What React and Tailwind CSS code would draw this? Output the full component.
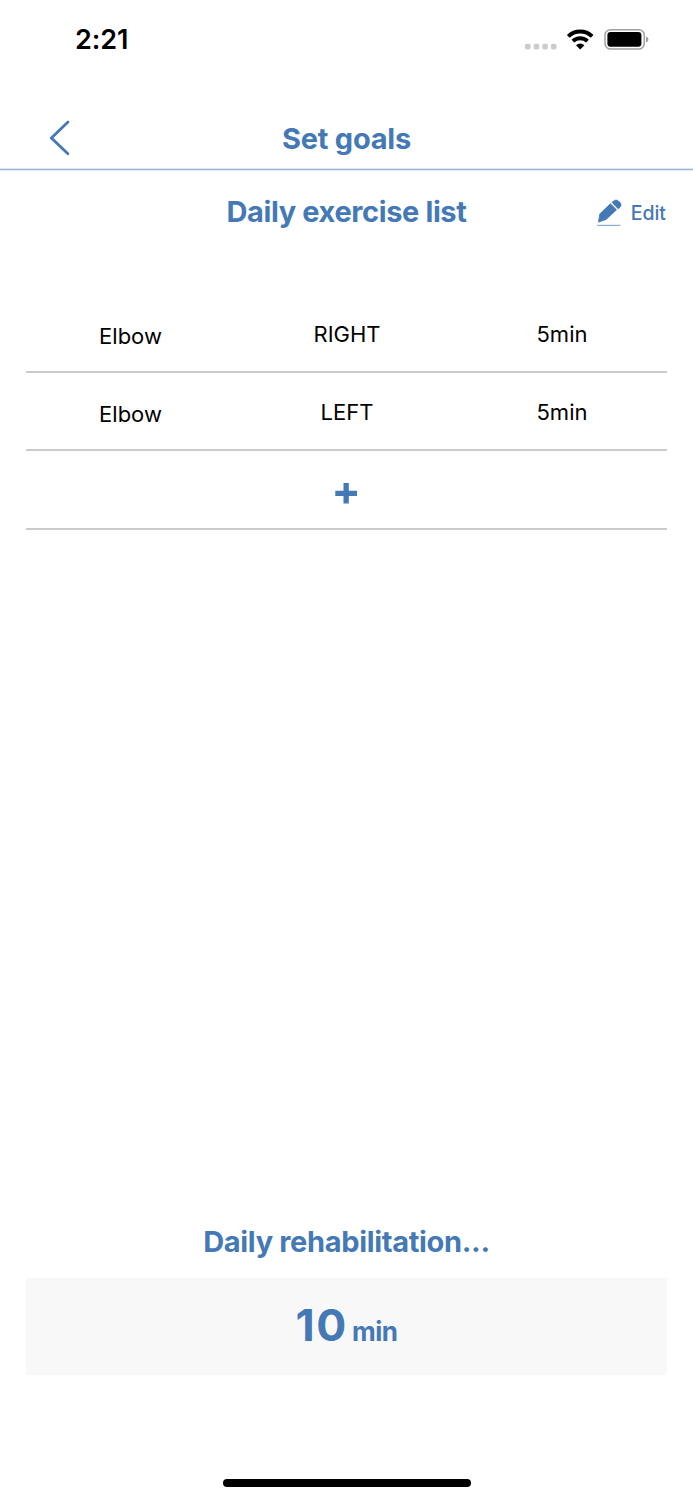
import React from "react";

const exercises = [
  { joint: "Elbow", side: "RIGHT", time: "5min" },
  { joint: "Elbow", side: "LEFT", time: "5min" },
];

function StatusBar() {
  return (
    <div className="flex h-[80px] items-center pl-[75px] pr-[44px]">
      <span className="pb-px text-[27px] font-semibold leading-none tracking-[-0.1px] text-black">2:21</span>
      <svg className="ml-auto h-[30px] w-[126px]" viewBox="523 25 126 30">
        <g fill="#cbcbcb">
          <rect x="525" y="43.8" width="5.6" height="5.6" rx="1.6" />
          <rect x="533.6" y="43.8" width="5.6" height="5.6" rx="1.6" />
          <rect x="542.3" y="43.8" width="5.6" height="5.6" rx="1.6" />
          <rect x="550.9" y="43.8" width="5.6" height="5.6" rx="1.6" />
        </g>
        <g fill="none" stroke="#000" strokeWidth="4">
          <path d="M568.3 36.4a17 17 0 0 1 23.8 0" />
          <path d="M572.9 41.2a10.4 10.4 0 0 1 14.6 0" />
        </g>
        <path d="M580.2 49.4l-4.2-4.2a6 6 0 0 1 8.4 0z" fill="#000" />
        <rect x="605" y="29.7" width="39.3" height="19.4" rx="5.6" fill="none" stroke="#a0a0a0" strokeWidth="1.5" />
        <rect x="607.4" y="32" width="34" height="14.8" rx="3.2" fill="#000" />
        <path d="M646 36.6c3.2 1 3.2 4.8 0 5.8z" fill="#a0a0a0" />
      </svg>
    </div>
  );
}

function Header() {
  return (
    <header className="flex flex-col">
      <div className="mt-[28px] grid h-[60px] grid-cols-[1fr_auto_1fr] items-center">
        <button aria-label="Back" className="ml-[46px] w-[28px]">
          <svg className="h-[40px] w-[28px]" viewBox="46 118 28 40" fill="none" stroke="#4479b6" strokeWidth="2.8" strokeLinecap="round">
            <path d="M68 122 51.4 138 67.9 153.8" />
          </svg>
        </button>
        <h1 className="text-[29px] font-bold leading-none tracking-[-0.25px]">Set goals</h1>
      </div>
      <div className="h-px bg-[#dce5f0]" />
      <div className="h-px bg-[#9ab6d8]" />
      <div className="h-px bg-[#e3eaf3]" />
    </header>
  );
}

function EditButton() {
  return (
    <button className="ml-auto mr-[27px] flex items-center gap-[9px] pt-[3px]">
      <svg className="h-[30px] w-[25px]" viewBox="597 198 25 30" fill="#4479b6" stroke="#4479b6" strokeLinejoin="round">
        <path d="M598.5 222.1l1.3-8.2 10.6-10.1 6.1 6-10.5 9.8z" strokeWidth=".8" />
        <path d="M611.9 202.4l1.6-1.5c1.5-1.3 3.6-1.3 5 0l1.7 1.7c1.3 1.4 1.2 3.4-.1 4.7l-1.9 1.6z" strokeWidth=".5" />
        <path d="M597 225.4h23.5" stroke="#8eafd5" strokeWidth="1.2" />
      </svg>
      <span className="pt-[2px] text-[19.5px] font-medium leading-none">Edit</span>
    </button>
  );
}

export default function App() {
  return (
    <main className="flex h-[1500px] w-[693px] flex-col bg-white font-['Inter',sans-serif] text-[#4479b6]">
      <StatusBar />
      <Header />
      <section className="flex flex-col">
        <div className="grid h-[81px] grid-cols-[1fr_auto_1fr] items-center">
          <span />
          <h2 className="text-[29px] font-bold leading-none tracking-[-0.39px]">Daily exercise list</h2>
          <EditButton />
        </div>
        <div className="mx-[26px] mt-[43px] flex flex-col text-[22px] text-black">
          {exercises.map((e) => (
            <div key={e.side} className="grid h-[78px] grid-cols-[209px_1fr_210px] items-center border-b-2 border-[#cbcbcb] pt-[2px] text-center leading-none">
              <span className="pt-[3px]">{e.joint}</span>
              <span className="pl-[2px]">{e.side}</span>
              <span>{e.time}</span>
            </div>
          ))}
          <button aria-label="Add exercise" className="flex h-[79px] items-center justify-center border-b-2 border-[#cbcbcb]">
            <svg className="mr-px mt-[6px] h-[24px] w-[24px]" viewBox="334 481 24 24" fill="#4479b6">
              <path d="M343.5 483h5.3v7.7h8.2v5.3h-8.2v7.6h-5.3v-7.6h-8.2v-5.3h8.2z" />
            </svg>
          </button>
        </div>
      </section>
      <section className="mx-[26px] mt-auto flex flex-col items-center">
        <h2 className="pt-px text-[29px] font-bold leading-[73px] tracking-[-0.33px]">Daily rehabilitation...</h2>
        <div className="flex h-[97px] w-full items-center justify-center gap-[4px] bg-[#f8f8f8]">
          <span className="pb-[2px] text-[44.5px] font-bold leading-none tracking-[1.6px]">10</span>
          <span className="pt-[11px] text-[26px] font-bold leading-none tracking-[-0.5px]">min</span>
        </div>
      </section>
      <div className="mx-auto mb-[13px] mt-[104px] h-[8px] w-[248px] shrink-0 rounded-full bg-black" />
    </main>
  );
}
